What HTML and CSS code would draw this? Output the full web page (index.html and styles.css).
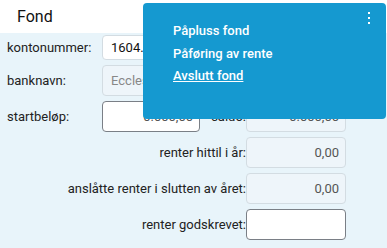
FILE: index.html
```html
<!DOCTYPE html>
<html lang="no">
<head>
<meta charset="utf-8">
<link rel="stylesheet" href="styles.css">
</head>
<body>
<div class="page">
  <header class="header"><span class="title">Fond</span></header>
  <main class="form">
    <div class="row r1">
      <label class="lbl">kontonummer:</label>
      <div class="inp wide white lefttext">1604.</div>
    </div>
    <div class="row">
      <label class="lbl">banknavn:</label>
      <div class="inp wide dis lefttext gray">Eccles</div>
    </div>
    <div class="row">
      <label class="lbl">startbeløp:</label>
      <div class="inp small white dark">0.000,00</div>
      <label class="rlbl mid">saldo:</label>
      <div class="inp right dis">0.000,00</div>
    </div>
    <div class="row">
      <label class="rlbl">renter hittil i år:</label>
      <div class="inp right dis">0,00</div>
    </div>
    <div class="row">
      <label class="rlbl">anslåtte renter i slutten av året:</label>
      <div class="inp right dis">0,00</div>
    </div>
    <div class="row">
      <label class="rlbl">renter godskrevet:</label>
      <div class="inp right white dark"></div>
    </div>
  </main>
  <div class="menu">
    <div class="dots"><i></i><i></i><i></i></div>
    <ul class="items">
      <li>Påpluss fond</li>
      <li>Påføring av rente</li>
      <li class="u">Avslutt fond</li>
    </ul>
  </div>
</div>
</body>
</html>
```

FILE: styles.css
```css
* { box-sizing: border-box; }
html, body { margin: 0; padding: 0; }
body {
  font-family: Roboto, "Liberation Sans", sans-serif;
  color: #222;
  background: #e8f4fa;
  width: 387px;
  height: 248px;
  overflow: hidden;
}
.page { position: relative; width: 387px; height: 248px; }
.header {
  height: 33px;
  background: #fff;
  padding-left: 17px;
  display: flex;
  align-items: center;
}
.title { font-size: 16px; color: #111; }
.form {
  background: #e8f4fa;
  padding-top: 2px;
  display: flex;
  flex-direction: column;
  gap: 5px;
}
.row {
  display: flex;
  align-items: center;
  height: 31px;
  font-size: 13px;
}
.row.r1 { height: 25px; }
.lbl { width: 102px; padding-left: 7px; }
.rlbl { width: 246px; text-align: right; }
.rlbl.mid { width: 46px; }
.inp {
  height: 100%;
  border-radius: 4px;
  border: 1px solid #d3dce2;
  display: flex;
  align-items: center;
  justify-content: flex-end;
  padding: 0 6px 0 8px;
  font-size: 13px;
  color: #555;
}
.inp.wide { width: 244px; }
.inp.small { width: 98px; }
.inp.right { width: 100px; }
.inp.white { background: #fff; }
.inp.dark { border-color: #7a7f86; }
.inp.dis { background: #eef5fa; }
.inp.lefttext { justify-content: flex-start; color: #111; }
.inp.gray { color: #888; }
.menu {
  position: absolute;
  left: 143px;
  top: 3px;
  width: 243px;
  height: 116px;
  background: #1599d0;
  border-radius: 4px;
  color: #fff;
}
.dots {
  position: absolute;
  right: 16px;
  top: 9px;
  display: flex;
  flex-direction: column;
  gap: 3px;
}
.dots i { display: block; width: 2px; height: 2px; background: #fff; }
.items {
  list-style: none;
  margin: 0;
  padding: 20px 0 0 30px;
  font-size: 13px;
  font-weight: 500;
}
.items li { height: 22.5px; line-height: 16px; }
.items li.u { text-decoration: underline; }
```
